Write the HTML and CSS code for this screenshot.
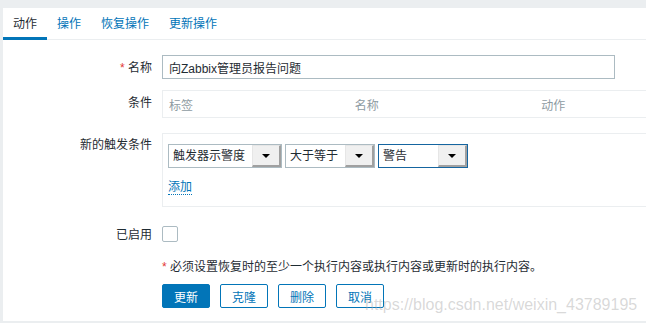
FILE: index.html
```html
<!DOCTYPE html>
<html lang="zh-CN">
<head>
    <meta charset="UTF-8">
    <title>动作</title>
    <link rel="stylesheet" href="styles.css">
</head>
<body>
    <div class="panel">
        <ul class="tabs">
            <li class="active">动作</li>
            <li>操作</li>
            <li>恢复操作</li>
            <li>更新操作</li>
        </ul>

        <div class="form">
            <div class="row row-name">
                <label class="label"><span class="req">*</span> 名称</label>
                <div class="field">
                    <input type="text" class="text-input" value="向Zabbix管理员报告问题">
                </div>
            </div>

            <div class="row row-conditions">
                <label class="label">条件</label>
                <div class="field">
                    <table class="cond-table">
                        <tr>
                            <th>标签</th>
                            <th>名称</th>
                            <th>动作</th>
                        </tr>
                    </table>
                </div>
            </div>

            <div class="row row-new">
                <label class="label">新的触发条件</label>
                <div class="field">
                    <div class="new-box">
                        <div class="selects">
                            <div class="select select-wide">
                                <span class="select-text">触发器示警度</span>
                                <span class="select-btn"><i class="arrow"></i></span>
                            </div>
                            <div class="select">
                                <span class="select-text">大于等于</span>
                                <span class="select-btn"><i class="arrow"></i></span>
                            </div>
                            <div class="select focused">
                                <span class="select-text">警告</span>
                                <span class="select-btn"><i class="arrow"></i></span>
                            </div>
                        </div>
                        <a class="add-link">添加</a>
                    </div>
                </div>
            </div>

            <div class="row row-enabled">
                <label class="label">已启用</label>
                <div class="field">
                    <span class="checkbox"></span>
                </div>
            </div>

            <div class="row row-note">
                <div class="field note"><span class="req">*</span> 必须设置恢复时的至少一个执行内容或执行内容或更新时的执行内容。</div>
            </div>

            <div class="row row-buttons">
                <div class="field buttons">
                    <button class="btn btn-main">更新</button>
                    <button class="btn">克隆</button>
                    <button class="btn">删除</button>
                    <button class="btn">取消</button>
                </div>
            </div>
        </div>
    </div>

    <div class="watermark">https://blog.csdn.net/weixin_43789195</div>
</body>
</html>
```

FILE: styles.css
```css
body {
    margin: 0;
    background: #ebeef0;
    font-family: "Liberation Sans", Arial, "Noto Sans CJK SC", sans-serif;
    font-size: 12px;
    color: #1f2c33;
    overflow: hidden;
    height: 323px;
    position: relative;
}
.panel {
    margin: 8px 0 0 3px;
    background: #fff;
    padding-bottom: 13px;
    overflow: hidden;
}
.tabs {
    display: flex;
    margin: 0;
    padding: 0;
    list-style: none;
    border-bottom: 1px solid #ebeef0;
}
.tabs li {
    padding: 3px 10px 0;
    line-height: 26px;
    border-bottom: 3px solid transparent;
    margin-bottom: -1px;
    color: #0275b8;
}
.tabs li.active {
    color: #1f2c33;
    border-bottom-color: #0275b8;
}
.form {
    padding-top: 15px;
}
.row {
    display: grid;
    grid-template-columns: 149px 1fr;
    column-gap: 10px;
}
.label {
    text-align: right;
    line-height: 24px;
}
.field {
    grid-column: 2;
    min-width: 0;
}
.req {
    color: #e33734;
}
.text-input {
    box-sizing: border-box;
    width: 453px;
    height: 24px;
    margin: 0;
    padding: 0 6px;
    border: 1px solid #acbbc2;
    font: inherit;
    color: #1f2c33;
    outline: none;
}
.row-name .label {
    padding-top: 1px;
}
.row-conditions {
    margin-top: 10px;
}
.row-conditions .label {
    padding-top: 1px;
}
.cond-table {
    width: 560px;
    border-collapse: collapse;
    table-layout: fixed;
    border: 1px solid #ebeef0;
}
.cond-table th {
    text-align: left;
    font-weight: normal;
    color: #8e9ba2;
    height: 26px;
    padding: 0 0 0 6px;
}
.row-new {
    margin-top: 15px;
}
.row-new .label {
    line-height: 24px;
}
.new-box {
    width: 560px;
    border: 1px solid #ebeef0;
    padding: 10px 5px 11px;
}
.selects {
    display: flex;
    gap: 3px;
}
.select {
    box-sizing: border-box;
    display: flex;
    width: 90px;
    height: 24px;
    border: 1px solid #acbbc2;
    background: #fff;
}
.select-wide {
    width: 114px;
}
.select.focused {
    border-color: #1565a0;
}
.select-text {
    flex: 1;
    padding-left: 4px;
    line-height: 22px;
    white-space: nowrap;
    overflow: hidden;
}
.select-btn {
    box-sizing: border-box;
    width: 29px;
    display: flex;
    align-items: center;
    justify-content: center;
    background: #f0f0f0;
    border-top: 1px solid #e6e6e6;
    border-left: 1px solid #e6e6e6;
    border-right: 2px solid #a0a0a0;
    border-bottom: 2px solid #a0a0a0;
}
.arrow {
    width: 0;
    height: 0;
    border-left: 4px solid transparent;
    border-right: 4px solid transparent;
    border-top: 4px solid #000;
}
.add-link {
    display: inline-block;
    margin-top: 12px;
    line-height: 14px;
    color: #0275b8;
    border-bottom: 1px dotted #0275b8;
}
.row-enabled {
    margin-top: 19px;
}
.row-enabled .label {
    line-height: 16px;
    padding-top: 1px;
}
.checkbox {
    display: block;
    box-sizing: border-box;
    width: 16px;
    height: 16px;
    border: 1px solid #acbbc2;
    border-radius: 2px;
}
.row-note {
    margin-top: 16px;
}
.note {
    line-height: 16px;
}
.row-buttons {
    margin-top: 9px;
}
.buttons {
    display: flex;
    gap: 10px;
}
.btn {
    box-sizing: border-box;
    width: 48px;
    height: 24px;
    padding: 0;
    border: 1px solid #0275b8;
    border-radius: 2px;
    background: #fff;
    color: #0275b8;
    font: inherit;
}
.btn-main {
    background: #0275b8;
    color: #fff;
}
.watermark {
    position: absolute;
    left: 365px;
    top: 297px;
    font-size: 16px;
    line-height: 16px;
    color: rgba(170, 170, 170, 0.45);
    white-space: nowrap;
}
```
